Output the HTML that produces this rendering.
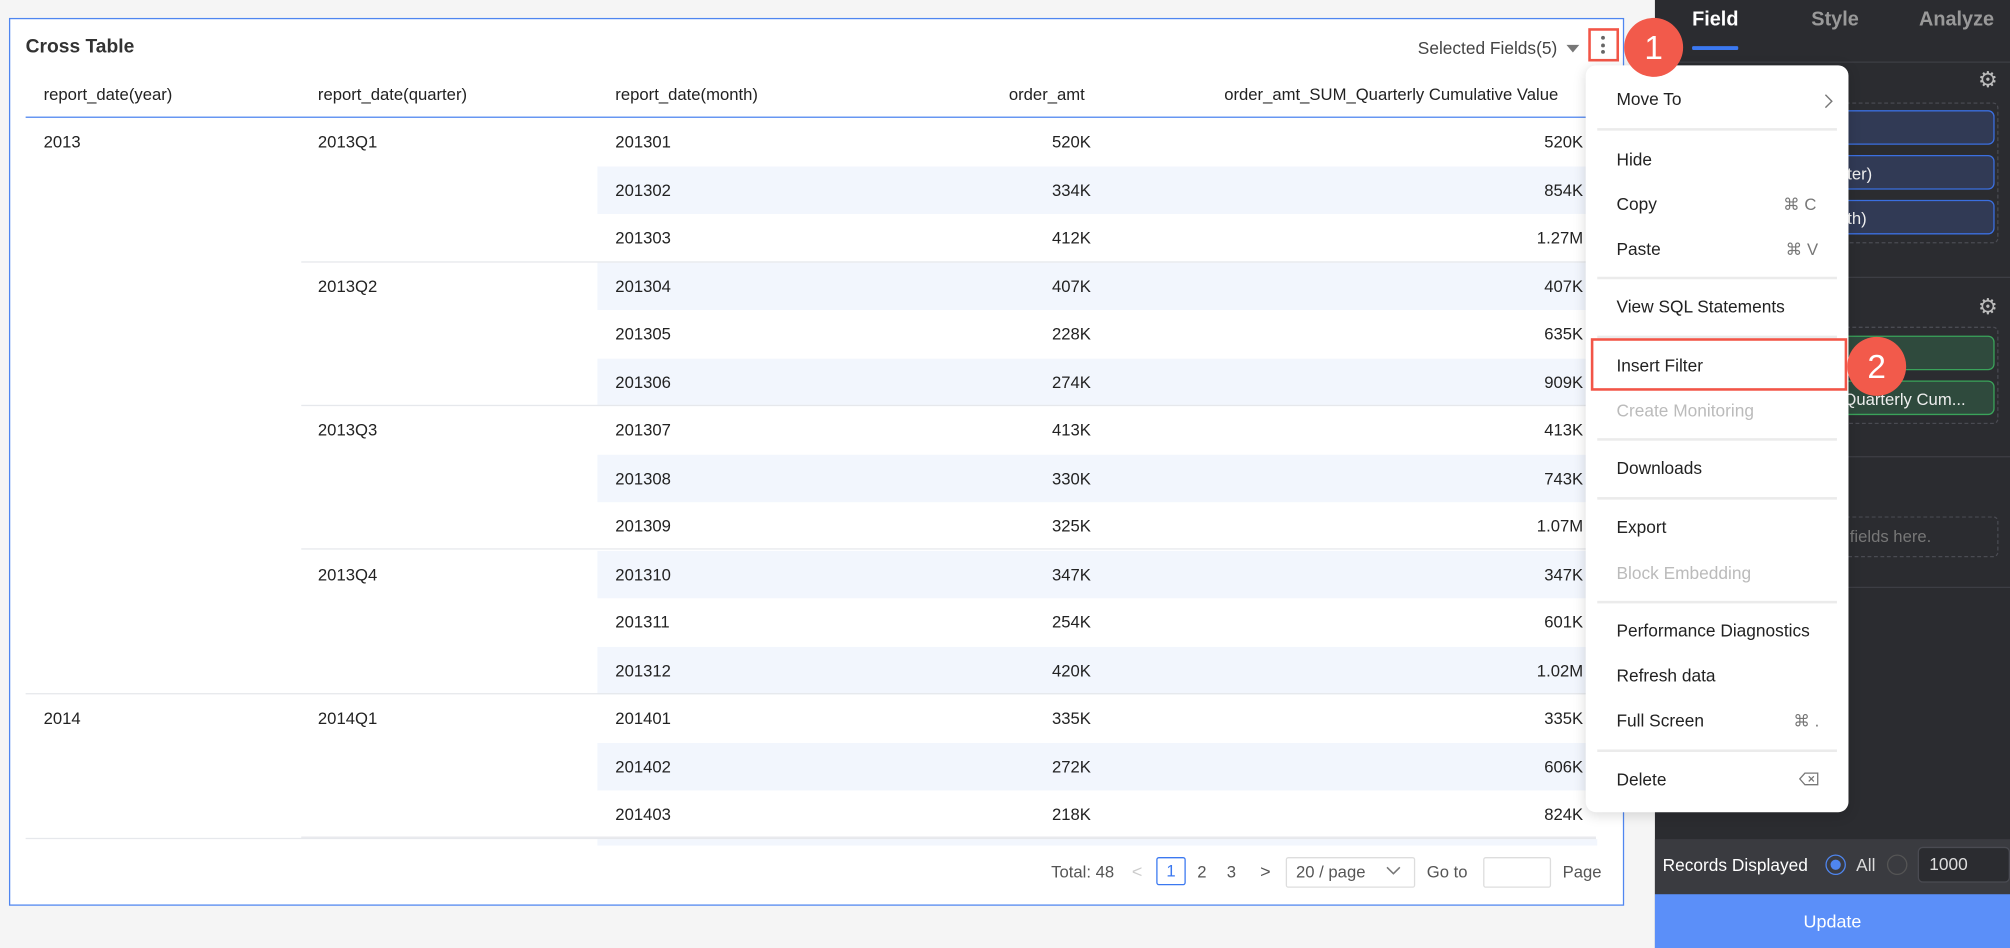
<!DOCTYPE html>
<html><head><meta charset="utf-8"><style>
*{margin:0;padding:0;box-sizing:border-box}
html,body{width:2010px;height:948px;overflow:hidden;background:#f5f5f5}
#w{position:absolute;left:0;top:0;width:1568px;height:740px;transform:scale(1.28189,1.2811);transform-origin:0 0;font-family:"Liberation Sans",sans-serif;color:#222;font-size:13px}
.a{position:absolute;white-space:nowrap}
.r{position:absolute;height:37.5px;line-height:37.5px;white-space:nowrap}
.stripe{position:absolute;left:466px;width:780px;height:37.5px;background:#f2f6fd}
.hl{position:absolute;height:1px;background:#e6e8ec}
.mi{position:absolute;left:1261px;font-size:13.5px;color:#222;white-space:nowrap}
.sc{position:absolute;font-size:13px;color:#777;white-space:nowrap}
.md{position:absolute;left:1246px;width:187px;height:1.5px;background:#ebebeb}
.pill{position:absolute;left:1436px;width:120px;height:27px;border-radius:5px;color:#eee;font-size:13px;line-height:27px;overflow:hidden;white-space:nowrap}
.pb{background:#313a55;border:1px solid #3b6fe0}
.pg{background:#2f4a3d;border:1px solid #3aa35a}
</style></head><body><div id="w">
<div class="a" style="left:7px;top:14px;width:1260px;height:693px;background:#fff;border:1px solid #4f86f0"></div>
<div class="a" style="left:20px;top:28px;font-size:15px;font-weight:bold;color:#333">Cross Table</div>
<div class="a" style="left:1106px;top:30px;font-size:13.5px;color:#444">Selected Fields(5)</div>
<div class="a" style="left:1222px;top:35px;width:0;height:0;border-left:5px solid transparent;border-right:5px solid transparent;border-top:6px solid #777"></div>
<div class="a" style="left:1239px;top:22px;width:24px;height:26px;border:2px solid #f25547"></div>
<div class="a" style="left:1249px;top:28px;width:3px;height:3px;border-radius:2px;background:#666"></div>
<div class="a" style="left:1249px;top:33.5px;width:3px;height:3px;border-radius:2px;background:#666"></div>
<div class="a" style="left:1249px;top:39px;width:3px;height:3px;border-radius:2px;background:#666"></div>

<div class="a" style="left:34px;top:66px">report_date(year)</div>
<div class="a" style="left:248px;top:66px">report_date(quarter)</div>
<div class="a" style="left:480px;top:66px">report_date(month)</div>
<div class="a" style="left:787px;top:66px">order_amt</div>
<div class="a" style="left:955px;top:66px">order_amt_SUM_Quarterly Cumulative Value</div>
<div class="a" style="left:20px;top:90.5px;width:1230px;height:1px;background:#4f86f0"></div>

<div class="stripe" style="top:129.5px"></div><div class="stripe" style="top:204.5px"></div><div class="stripe" style="top:279.5px"></div><div class="stripe" style="top:354.5px"></div><div class="stripe" style="top:429.5px"></div><div class="stripe" style="top:504.5px"></div><div class="stripe" style="top:579.5px"></div><div class="stripe" style="top:654.5px;height:5px"></div>
<div class="hl" style="left:235px;top:204px;width:1010px"></div>
<div class="hl" style="left:235px;top:316px;width:1010px"></div>
<div class="hl" style="left:235px;top:428px;width:1010px"></div>
<div class="hl" style="left:20px;top:541px;width:1225px"></div>
<div class="hl" style="left:20px;top:654px;width:1225px"></div>
<div class="hl" style="left:235px;top:653px;width:1010px"></div>

<div class="r" style="left:34px;top:92px">2013</div>
<div class="r" style="left:34px;top:542px">2014</div>
<div class="r" style="left:248px;top:92px">2013Q1</div>
<div class="r" style="left:248px;top:204.5px">2013Q2</div>
<div class="r" style="left:248px;top:317px">2013Q3</div>
<div class="r" style="left:248px;top:429.5px">2013Q4</div>
<div class="r" style="left:248px;top:542px">2014Q1</div>

<div class="r" style="left:480px;top:92px">201301</div><div class="r" style="left:700px;width:151px;text-align:right;top:92px">520K</div><div class="r" style="left:1000px;width:235px;text-align:right;top:92px">520K</div>
<div class="r" style="left:480px;top:129.5px">201302</div><div class="r" style="left:700px;width:151px;text-align:right;top:129.5px">334K</div><div class="r" style="left:1000px;width:235px;text-align:right;top:129.5px">854K</div>
<div class="r" style="left:480px;top:167px">201303</div><div class="r" style="left:700px;width:151px;text-align:right;top:167px">412K</div><div class="r" style="left:1000px;width:235px;text-align:right;top:167px">1.27M</div>
<div class="r" style="left:480px;top:204.5px">201304</div><div class="r" style="left:700px;width:151px;text-align:right;top:204.5px">407K</div><div class="r" style="left:1000px;width:235px;text-align:right;top:204.5px">407K</div>
<div class="r" style="left:480px;top:242px">201305</div><div class="r" style="left:700px;width:151px;text-align:right;top:242px">228K</div><div class="r" style="left:1000px;width:235px;text-align:right;top:242px">635K</div>
<div class="r" style="left:480px;top:279.5px">201306</div><div class="r" style="left:700px;width:151px;text-align:right;top:279.5px">274K</div><div class="r" style="left:1000px;width:235px;text-align:right;top:279.5px">909K</div>
<div class="r" style="left:480px;top:317px">201307</div><div class="r" style="left:700px;width:151px;text-align:right;top:317px">413K</div><div class="r" style="left:1000px;width:235px;text-align:right;top:317px">413K</div>
<div class="r" style="left:480px;top:354.5px">201308</div><div class="r" style="left:700px;width:151px;text-align:right;top:354.5px">330K</div><div class="r" style="left:1000px;width:235px;text-align:right;top:354.5px">743K</div>
<div class="r" style="left:480px;top:392px">201309</div><div class="r" style="left:700px;width:151px;text-align:right;top:392px">325K</div><div class="r" style="left:1000px;width:235px;text-align:right;top:392px">1.07M</div>
<div class="r" style="left:480px;top:429.5px">201310</div><div class="r" style="left:700px;width:151px;text-align:right;top:429.5px">347K</div><div class="r" style="left:1000px;width:235px;text-align:right;top:429.5px">347K</div>
<div class="r" style="left:480px;top:467px">201311</div><div class="r" style="left:700px;width:151px;text-align:right;top:467px">254K</div><div class="r" style="left:1000px;width:235px;text-align:right;top:467px">601K</div>
<div class="r" style="left:480px;top:504.5px">201312</div><div class="r" style="left:700px;width:151px;text-align:right;top:504.5px">420K</div><div class="r" style="left:1000px;width:235px;text-align:right;top:504.5px">1.02M</div>
<div class="r" style="left:480px;top:542px">201401</div><div class="r" style="left:700px;width:151px;text-align:right;top:542px">335K</div><div class="r" style="left:1000px;width:235px;text-align:right;top:542px">335K</div>
<div class="r" style="left:480px;top:579.5px">201402</div><div class="r" style="left:700px;width:151px;text-align:right;top:579.5px">272K</div><div class="r" style="left:1000px;width:235px;text-align:right;top:579.5px">606K</div>
<div class="r" style="left:480px;top:617px">201403</div><div class="r" style="left:700px;width:151px;text-align:right;top:617px">218K</div><div class="r" style="left:1000px;width:235px;text-align:right;top:617px">824K</div>

<div class="a" style="left:820px;top:673px;color:#555">Total: 48</div>
<div class="a" style="left:883px;top:672px;color:#ccc;font-size:14px">&lt;</div>
<div class="a" style="left:902px;top:669px;width:23px;height:22px;border:1px solid #3b78f0;border-radius:2px;color:#3b78f0;text-align:center;line-height:20px">1</div>
<div class="a" style="left:934px;top:673px;color:#555">2</div>
<div class="a" style="left:957px;top:673px;color:#555">3</div>
<div class="a" style="left:983px;top:672px;color:#555;font-size:14px">&gt;</div>
<div class="a" style="left:1003px;top:669px;width:101px;height:24px;border:1px solid #ddd;border-radius:2px;color:#555;padding-left:7px;line-height:22px">20 / page</div>
<svg class="a" style="left:1080px;top:675px" width="14" height="10"><path d="M2 2l5 5 5-5" stroke="#777" fill="none" stroke-width="1.2"/></svg>
<div class="a" style="left:1113px;top:673px;color:#555">Go to</div>
<div class="a" style="left:1157px;top:669px;width:53px;height:24px;border:1px solid #ddd;border-radius:2px"></div>
<div class="a" style="left:1219px;top:673px;color:#555">Page</div>

<div class="a" style="left:1291px;top:0;width:277px;height:740px;background:#2b2c30"></div>
<div class="a" style="left:1320px;top:7px;font-size:15.5px;font-weight:bold;color:#fff">Field</div>
<div class="a" style="left:1413px;top:7px;font-size:15.5px;font-weight:bold;color:#999">Style</div>
<div class="a" style="left:1497px;top:7px;font-size:15.5px;font-weight:bold;color:#999">Analyze</div>
<div class="a" style="left:1320px;top:36px;width:36px;height:3px;background:#3b78f0;border-radius:1px"></div>
<div class="a" style="left:1291px;top:48px;width:277px;height:1px;background:#3d3e44"></div>
<div class="a" style="left:1543px;top:53px;font-size:17px;color:#bbb">⚙</div>
<div class="a" style="left:1543px;top:230px;font-size:17px;color:#bbb">⚙</div>
<div class="a" style="left:1436px;top:80px;width:123px;height:110px;border:1px dashed #4a4b52;border-radius:4px"></div>
<div class="pill pb" style="top:86px"></div>
<div class="pill pb" style="top:121px;padding-left:4px">ter)</div>
<div class="pill pb" style="top:156px;padding-left:4px">th)</div>
<div class="a" style="left:1291px;top:216px;width:277px;height:1px;background:#3d3e44"></div>
<div class="a" style="left:1436px;top:255px;width:123px;height:76px;border:1px dashed #4a4b52;border-radius:4px"></div>
<div class="pill pg" style="top:262px"></div>
<div class="pill pg" style="top:297px;padding-left:1px">Quarterly Cum...</div>
<div class="a" style="left:1291px;top:356px;width:277px;height:1px;background:#3d3e44"></div>
<div class="a" style="left:1436px;top:403px;width:123px;height:32px;border:1px dashed #4a4b52;border-radius:4px;color:#777;padding-left:6px;line-height:30px">fields here.</div>
<div class="a" style="left:1291px;top:458px;width:277px;height:1px;background:#3d3e44"></div>
<div class="a" style="left:1291px;top:655px;width:277px;height:43px;background:#3a3b40"></div>
<div class="a" style="left:1297px;top:668px;color:#fff;font-size:13.5px">Records Displayed</div>
<div class="a" style="left:1424px;top:667px;width:16px;height:16px;border:1px solid #4f86f0;border-radius:50%"></div>
<div class="a" style="left:1428px;top:671px;width:8px;height:8px;background:#4f86f0;border-radius:50%"></div>
<div class="a" style="left:1448px;top:668px;color:#ddd;font-size:13.5px">All</div>
<div class="a" style="left:1472px;top:667px;width:16px;height:16px;border:1px solid #555;border-radius:50%"></div>
<div class="a" style="left:1496px;top:661px;width:72px;height:28px;border:1px solid #4a4b52;border-radius:4px;background:#2b2c30;color:#ddd;padding-left:8px;line-height:26px;font-size:13.5px">1000</div>
<div class="a" style="left:1291px;top:698px;width:277px;height:42px;background:#5b8ff9;color:#fff;text-align:center;line-height:42px;font-size:14px">Update</div>

<div class="a" style="left:1237px;top:51px;width:205px;height:583px;background:#fff;border-radius:8px;box-shadow:0 2px 10px rgba(0,0,0,.15)"></div>
<div class="mi" style="top:70px">Move To</div>
<svg class="a" style="left:1422px;top:72px" width="10" height="14"><path d="M2 2l5 5-5 5" stroke="#777" fill="none" stroke-width="1.1"/></svg>
<div class="md" style="top:100px"></div>
<div class="mi" style="top:117px">Hide</div>
<div class="mi" style="top:152px">Copy</div><div class="sc" style="left:1391px;top:152px">⌘ C</div>
<div class="mi" style="top:187px">Paste</div><div class="sc" style="left:1393px;top:187px">⌘ V</div>
<div class="md" style="top:216px"></div>
<div class="mi" style="top:232px">View SQL Statements</div>
<div class="md" style="top:262px"></div>
<div class="mi" style="top:278px">Insert Filter</div>
<div class="a" style="left:1241px;top:264px;width:200px;height:41px;border:2.5px solid #f25547"></div>
<div class="mi" style="top:313px;color:#bbb">Create Monitoring</div>
<div class="md" style="top:342px"></div>
<div class="mi" style="top:358px">Downloads</div>
<div class="md" style="top:388px"></div>
<div class="mi" style="top:404px">Export</div>
<div class="mi" style="top:440px;color:#bbb">Block Embedding</div>
<div class="md" style="top:469px"></div>
<div class="mi" style="top:485px">Performance Diagnostics</div>
<div class="mi" style="top:520px">Refresh data</div>
<div class="mi" style="top:555px">Full Screen</div><div class="sc" style="left:1399px;top:555px">⌘ .</div>
<div class="md" style="top:585px"></div>
<div class="mi" style="top:601px">Delete</div>
<svg class="a" style="left:1403px;top:602px" width="16" height="12"><path d="M5 1.5h10v9H5L1 6z" stroke="#777" fill="none" stroke-width="1"/><path d="M8 4l4 4M12 4l-4 4" stroke="#777" stroke-width="1"/></svg>
<div class="a" style="left:1441px;top:263px;width:46px;height:46px;border-radius:23px;background:#f25a4b;color:#fff;font-size:26px;line-height:46px;text-align:center">2</div>
<div class="a" style="left:1267px;top:14px;width:46px;height:46px;border-radius:23px;background:#f25a4b;color:#fff;font-size:26px;line-height:46px;text-align:center">1</div>
</div></body></html>
